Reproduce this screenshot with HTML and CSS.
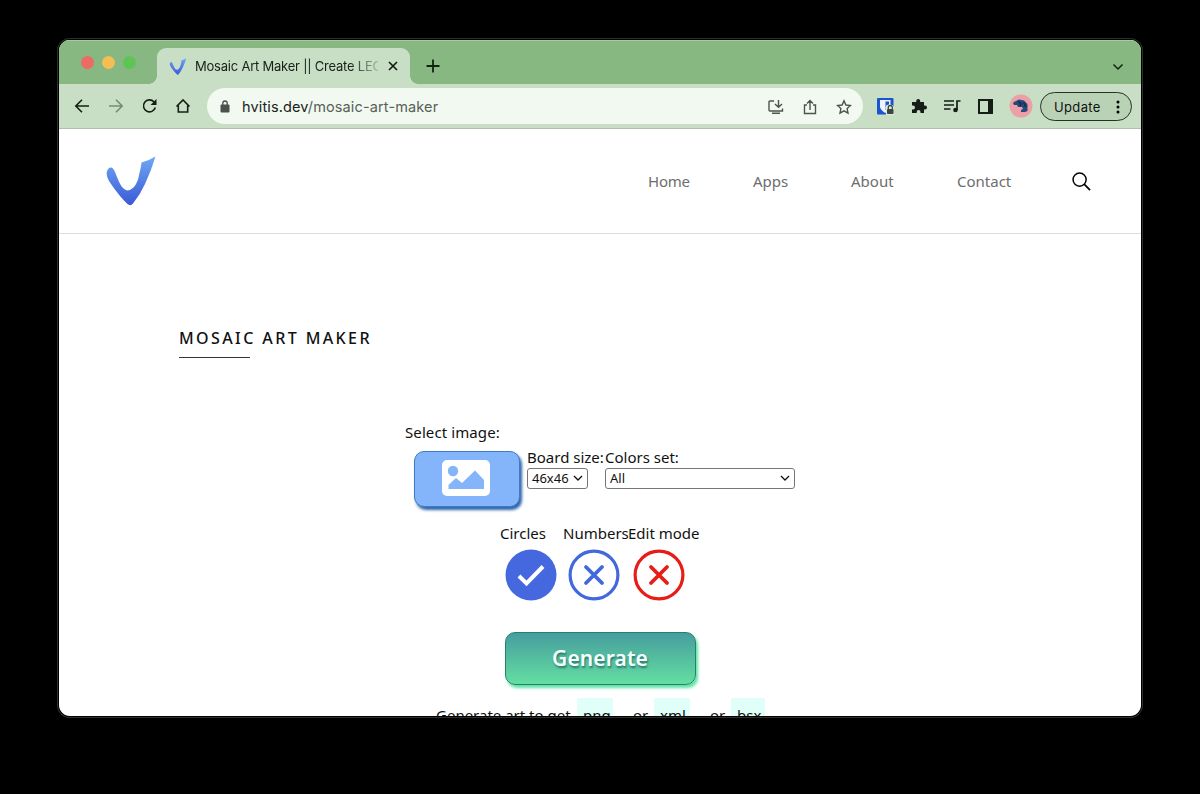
FILE: index.html
```
<!DOCTYPE html>
<html lang="en">
<head>
<meta charset="utf-8">
<title>Mosaic Art Maker</title>
<link rel="stylesheet" href="styles.css">
</head>
<body>
<svg class="defs" width="0" height="0" aria-hidden="true">
  <defs>
    <linearGradient id="logo-fill" x1="0" y1="0" x2="0" y2="1"><stop offset="0" stop-color="#6fa8f5"/><stop offset="1" stop-color="#3a59d6"/></linearGradient>
    <symbol id="logo" viewBox="0 0 50 50"><path fill="url(#logo-fill)" d="M.8 16Q2 11.500 5 11.500Q7 11.500 8.500 15C12 23 15 34 21.500 34.500C28 34 32 26 33 19Q35 12 35.500 6.500Q43 4.500 49.500 .5Q45 15 39 28Q34 39 27 47.500Q24.500 50.500 21.500 48Q14 41 5 28Q0 21 .8 16Z"/></symbol>
  </defs>
</svg>
<div class="window">
  <div class="tabstrip">
    <div class="lights"><i class="red"></i><i class="amber"></i><i class="green"></i></div>
    <div class="tab">
      <svg class="favicon" width="18" height="17"><use href="#logo"/></svg>
      <span class="tab-title">Mosaic Art Maker || Create LEG</span>
      <svg class="tab-close" width="10" height="10" viewBox="0 0 10 10"><path d="M1 1L9 9M9 1L1 9" stroke="#10180f" stroke-width="1.600"/></svg>
    </div>
    <svg class="new-tab" width="14" height="14" viewBox="0 0 14 14"><path d="M7 .5V13.500M.5 7H13.500" stroke="#10240f" stroke-width="1.800"/></svg>
    <svg class="tab-menu" width="12" height="8" viewBox="0 0 12 8"><path d="M1.500 1.500L6 6L10.500 1.500" fill="none" stroke="#10240f" stroke-width="1.500"/></svg>
  </div>
  <div class="toolbar">
    <svg class="nav-icon" width="16" height="16" viewBox="0 0 16 16"><path d="M15 8H2M8 1.800L1.800 8L8 14.200"/></svg>
    <svg class="nav-icon dim" width="16" height="16" viewBox="0 0 16 16"><path d="M1 8H14M8 1.800L14.200 8L8 14.200"/></svg>
    <svg class="nav-icon reload" width="16" height="16" viewBox="0 0 16 16"><path d="M14.300 9.500A6 6 0 1 1 12.900 3.800L14.500 5.600"/><path class="solid" d="M15.500 1V7H9.500Z"/></svg>
    <svg class="nav-icon house" width="16" height="16" viewBox="0 0 16 16"><path d="M1.500 8.500L8 2L14.500 8.500M3.300 7.500V14H12.700V7.500"/></svg>
    <div class="address">
      <svg class="lock" width="10" height="13" viewBox="0 0 10 13"><rect x=".5" y="4.500" width="9" height="8" rx="1" fill="#4c514d"/><path d="M2.800 5V3.200a2.200 2.200 0 0 1 4.400 0V5" fill="none" stroke="#4c514d" stroke-width="1.300"/></svg>
      <span class="url">hvitis.dev<span class="path">/mosaic-art-maker</span></span>
      <div class="address-actions">
        <svg width="16" height="16" viewBox="0 0 16 16"><path d="M6 2H2Q1 2 1 3V11Q1 12 2 12H14.500V9.500M10.500 1V8M7 5L10.500 8.300L14 5M4 14.200H12"/></svg>
        <svg width="16" height="16" viewBox="0 0 16 16"><path d="M5 6H2.500V14.500H13.500V6H11M8 11V1.500M5 4.500L8 1.500L11 4.500"/></svg>
        <svg width="16" height="16" viewBox="0 0 16 16"><path d="M8 1.800L9.900 6L14.500 6.500L11.100 9.600L12 14.200L8 11.900L4 14.200L4.900 9.600L1.500 6.500L6.100 6Z"/></svg>
      </div>
    </div>
    <div class="extensions">
      <svg width="17" height="17" viewBox="0 0 17 17"><rect width="16.500" height="16.500" rx="1" fill="#1955ce"/><path fill="#edf4ff" d="M3 2H13.500V9Q12.500 12 8.200 15Q3.500 12 3 9Z"/><path fill="#1955ce" d="M8.500 3.500H12V10L8.500 12Z"/><path fill="#dcebdc" d="M8.500 9Q9 6 12.500 6.500Q16 6 17 9V17H9Z"/><rect x="10" y="11" width="6.500" height="5" rx=".8" fill="#3d4540"/><path d="M11.300 11V9.500a2 2 0 0 1 4 0V11" fill="none" stroke="#3d4540" stroke-width="1.300"/></svg>
      <svg width="16" height="16" viewBox="0 0 16 16"><path fill="#151d16" d="M1 4H5.200V3a2 2 0 0 1 4 0V4H13V7.500H14a2 2 0 0 1 0 4H13V15H9.500V14a1.900 1.900 0 0 0-3.800 0V15H1V11.500H2A1.900 1.900 0 0 0 2 7.500H1Z"/></svg>
      <svg width="18" height="16" viewBox="0 0 18 16"><path d="M1 3H11M1 7H11M1 11H7.500M14 12V3H17.500" fill="none" stroke="#151d16" stroke-width="1.700"/><circle cx="12.500" cy="12" r="2.300" fill="#151d16"/></svg>
      <svg width="15" height="15" viewBox="0 0 15 15"><rect x="1" y="1" width="13" height="13" fill="none" stroke="#151d16" stroke-width="2"/><path d="M10 1H14V14H10Z" fill="#151d16"/></svg>
      <svg width="24" height="24" viewBox="0 0 24 24"><circle cx="12" cy="12" r="11.500" fill="#ec9fa6"/><path fill="#24497a" d="M5 8L10 5.500L15 6.500L18.500 10V17L16 18H12V16L14 15L13 13L9 13L8 11H5L4 9Z"/><path d="M9 7.500L12 9.500L11 12M14.500 8.500L17 13" stroke="#142546" stroke-width="1.200" fill="none"/></svg>
    </div>
    <div class="update">Update<svg width="4" height="14" viewBox="0 0 4 14"><circle cx="2" cy="2" r="1.500"/><circle cx="2" cy="7" r="1.500"/><circle cx="2" cy="12" r="1.500"/></svg></div>
  </div>
  <header class="site-header">
    <svg class="site-logo" width="50" height="50"><use href="#logo"/></svg>
    <nav><a class="home">Home</a><a class="apps">Apps</a><a class="about">About</a><a class="contact">Contact</a></nav>
    <svg class="search" width="19" height="19" viewBox="0 0 20 20"><circle cx="8" cy="8" r="6.900" fill="none" stroke="#050505" stroke-width="1.600"/><path d="M12.800 12.800L19 19" stroke="#050505" stroke-width="1.900"/></svg>
  </header>
  <main>
    <h1>MOSAIC ART MAKER</h1>
    <div class="image-label"><span>Select image:</span></div>
    <div class="options">
      <div class="upload"><svg width="48" height="36" viewBox="0 0 48 36"><rect width="48" height="36" rx="5" fill="#fff"/><circle cx="11" cy="11" r="5.200" fill="#84b4fa"/><path fill="#84b4fa" d="M6.500 29V25L14 18L20 23L33 10.500L42 20V29Z"/></svg></div>
      <div class="field board"><label>Board size:</label><div class="select">46x46<svg width="10" height="7" viewBox="0 0 10 7"><path d="M1 1L5 5L9 1"/></svg></div></div>
      <div class="field colors"><label>Colors set:</label><div class="select">All<svg width="10" height="7" viewBox="0 0 10 7"><path d="M1 1L5 5L9 1"/></svg></div></div>
    </div>
    <div class="toggles">
      <div class="toggle circles"><span>Circles</span><svg width="52" height="52" viewBox="0 0 52 52"><circle cx="26" cy="26" r="25.500" fill="#4668df"/><path d="M14 27L21.500 34.500L38 17.500" fill="none" stroke="#fff" stroke-width="4"/></svg></div>
      <div class="toggle numbers"><span>Numbers</span><svg width="52" height="52" viewBox="0 0 52 52"><circle cx="26" cy="26" r="23.900" fill="none" stroke="#4169dd" stroke-width="3.200"/><path d="M18 18L34 34M34 18L18 34" stroke="#4169dd" stroke-width="3.800" stroke-linecap="round"/></svg></div>
      <div class="toggle edit"><span>Edit mode</span><svg width="52" height="52" viewBox="0 0 52 52"><circle cx="26" cy="26" r="23.900" fill="none" stroke="#e61e17" stroke-width="3.200"/><path d="M18 18L34 34M34 18L18 34" stroke="#e61e17" stroke-width="3.800" stroke-linecap="round"/></svg></div>
    </div>
    <div class="generate">Generate</div>
    <div class="formats"><span class="intro">Generate art to get</span><code>png</code><span class="or">or</span><code>xml</code><span class="or">or</span><code>bsx</code></div>
  </main>
</div>
</body>
</html>
```
FILE: styles.css
```
* { box-sizing: border-box; }
body { margin: 0; height: 794px; padding: 40px 59px 0; background: #000; overflow: hidden; font-family: "Noto Sans", sans-serif; color: #111; }
svg { display: block; flex: none; }
.defs { position: absolute; }
.window { width: 1082px; height: 676px; border-radius: 11px; overflow: hidden; background: #fff; box-shadow: 0 0 0 1px #000, 0 0 0 2px #2b302b; }
.tabstrip { display: flex; height: 44px; background: #87b882; border-top: 1px solid #a7cba3; align-items: flex-start; }
.lights { display: flex; gap: 8px; padding: 15px 0 0 22px; width: 98px; }
.lights i { width: 13px; height: 13px; border-radius: 50%; }
.red { background: #ed6a65; }
.amber { background: #f5be53; }
.green { background: #60c455; }
.tab { position: relative; display: flex; align-items: center; width: 253px; height: 36px; margin-top: 7px; padding: 0 12px; border-radius: 9px 9px 0 0; background: #c8dfc5; }
.tab::before, .tab::after { content: ""; position: absolute; bottom: 0; width: 8px; height: 8px; }
.tab::before { left: -8px; background: radial-gradient(circle at 0 0, transparent 7.5px, #c8dfc5 8px); }
.tab::after { right: -8px; background: radial-gradient(circle at 100% 0, transparent 7.5px, #c8dfc5 8px); }
.tab-title { width: 183px; margin-left: 8px; white-space: nowrap; font: 13px/18px Inter, sans-serif; letter-spacing: -.22px; color: #182018; -webkit-mask-image: linear-gradient(90deg, #000 155px, transparent 190px); }
.tab-close { margin-left: 10px; }
.new-tab { margin: 18px 0 0 16px; }
.tab-menu { margin: 22px 17px 0 auto; }
.toolbar { display: flex; align-items: center; height: 45px; padding: 0 9px 0 15px; background: #c8dfc5; border-bottom: 1px solid #afbeae; }
.nav-icon { margin-right: 18px; fill: none; stroke: #142015; stroke-width: 1.600; }
.nav-icon.reload { margin-left: -1px; }
.nav-icon.house { margin-right: 16px; }
.dim { stroke: #758c74; }
.nav-icon .solid { fill: #142015; stroke: none; }
.address { display: flex; align-items: center; width: 656px; height: 36px; padding: 0 11px 0 13px; border-radius: 18px; background: #f1f9f1; }
.url { margin-left: 12px; padding-top: 1px; font: 14.500px/20px Inter, sans-serif; letter-spacing: .13px; color: #1a211a; }
.path { color: #586058; }
.address-actions { display: flex; gap: 18px; margin-left: auto; padding-top: 1px; }
.address-actions svg { fill: none; stroke: #4c554d; stroke-width: 1.400; }
.extensions { display: flex; align-items: center; justify-content: space-between; width: 156px; margin-left: 14px; }
.update { display: flex; align-items: center; justify-content: space-between; width: 92px; height: 29px; margin-left: auto; padding: 1px 11px 0 13px; border: 1px solid #263227; border-radius: 15px; background: #b9d2b6; font: 13px/16px Inter, sans-serif; letter-spacing: .35px; }
.site-header { display: flex; align-items: center; height: 105px; padding: 0 50px 0 47px; border-bottom: 1px solid #dcdcdc; }
nav { display: flex; margin-left: auto; padding-bottom: 1px; font-size: 15px; line-height: 22px; color: #6d6d6d; }
nav a { white-space: nowrap; }
.home { width: 105px; letter-spacing: -.2px; }
.apps { width: 98px; }
.about { width: 106px; }
.contact { width: 115px; }
main { padding: 92px 120px 0; font-size: 15px; line-height: 20px; }
h1 { position: relative; width: 220px; height: 32px; margin: 0 0 64px; padding-top: 1px; font-size: 16px; line-height: 23px; font-weight: 500; letter-spacing: 2.400px; white-space: nowrap; }
h1::after { content: ""; position: absolute; left: 0; bottom: 0; width: 71px; height: 1px; background: #333; }
.image-label { width: 390px; margin: 0 auto; height: 25px; letter-spacing: .1px; }
.options { display: flex; width: 390px; height: 76px; margin: 0 auto; padding-left: 9px; }
.upload { display: grid; place-items: center; width: 106px; height: 56px; margin-top: 4px; border: 1px solid #407bc4; border-radius: 10px; background: #84b4fa; box-shadow: 2px 3px 3px #2d65ad; }
.upload svg { margin: -2px 0 0 -2px; }
.field { white-space: nowrap; }
.board { width: 78px; margin-left: 7px; }
.field label { display: block; height: 21px; }
.select { display: flex; align-items: center; justify-content: space-between; height: 21px; padding: 0 4px 2px; border: 1px solid #777; border-radius: 3px; font-size: 13px; line-height: 18px; }
.select svg { margin-top: 2px; fill: none; stroke: #111; stroke-width: 1.300; }
.board .select { width: 61px; }
.colors .select { width: 190px; }
.toggles { display: flex; width: 200px; margin: 0 auto; height: 109px; }
.toggle { white-space: nowrap; }
.toggle span { display: block; height: 26px; }
.circles { width: 63px; }
.numbers { width: 65px; }
.edit { width: 72px; }
.circles svg, .numbers svg, .edit svg { margin-left: 5px; }
.generate { width: 191px; height: 53px; margin: 0 auto; border: 1px solid #277f70; border-radius: 10px; background: linear-gradient(#469e9e, #64dea1); box-shadow: 2px 3px 3px #5ee5a4; color: #f7fffc; font: 600 21px/51px "Noto Sans", sans-serif; letter-spacing: .1px; text-align: center; text-shadow: 1px 2px 2px #287b6f; }
.formats { display: flex; width: 328px; margin: 13px auto 0; white-space: nowrap; }
.formats > * { flex: none; }
.formats span { padding-top: 7px; }
.intro { width: 141px; }
.formats code { width: 36px; height: 36px; padding: 7px 0 0 6px; background: #e0fff8; font: inherit; }
.formats code:last-child { width: 34px; }
.or { width: 41px; padding-left: 20px; }
```
